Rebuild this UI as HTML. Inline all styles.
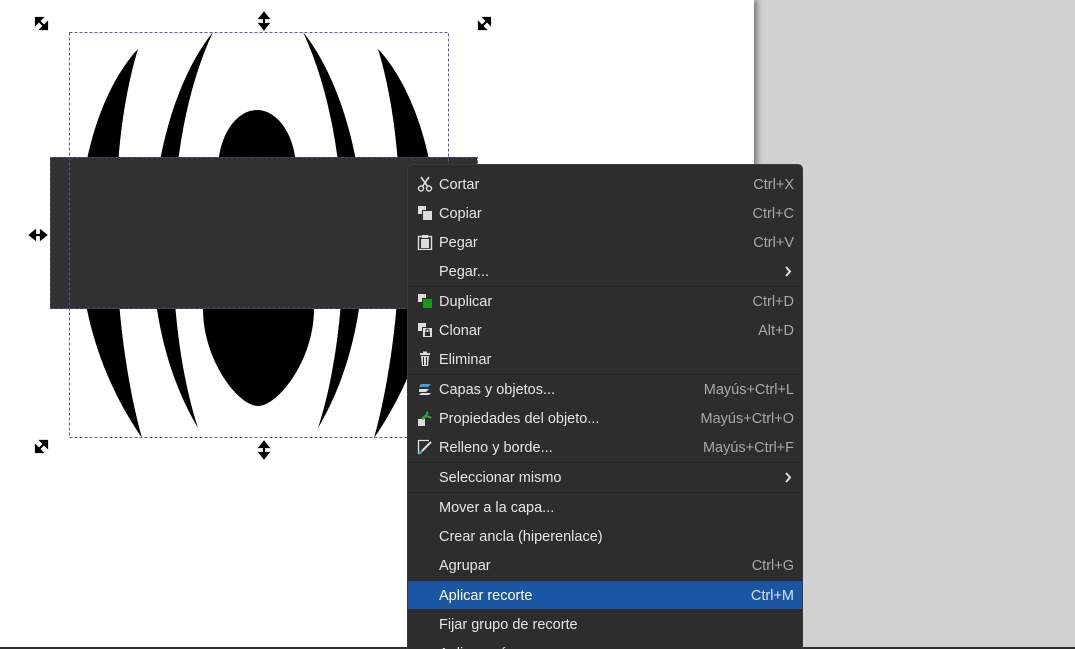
<!DOCTYPE html>
<html><head><meta charset="utf-8"><style>
html,body{margin:0;padding:0;width:1075px;height:649px;overflow:hidden}
body{position:relative;background:#d1d1d1;font-family:"Liberation Sans","DejaVu Sans",sans-serif}
#page{position:absolute;left:0;top:0;width:754px;height:647px;background:#fff;box-shadow:3px 0 6px rgba(0,0,0,.45)}
#bline{position:absolute;left:0;top:647px;width:1075px;height:2px;background:#2e2e2e}
#menu{position:absolute;left:407px;top:164px;width:396px;height:485px;background:#2d2d2d;border-radius:5px 5px 0 0;border:1px solid #3a3a3a;border-bottom:none;box-sizing:border-box;color:#e6e6e6;font-size:14.5px;overflow:hidden}
.it{position:absolute;left:0;width:394px;height:29px;line-height:31px}
.it .t{position:absolute;left:31px}
.it .k{position:absolute;right:8px;color:#a8a8a8}
.it .ic{position:absolute;left:9px;top:6px;width:16px;height:16px}
.sep{position:absolute;left:0;width:394px;height:1px;background:#242424}
.hl{background:#1a56a3;color:#fff}
.hl .k{color:#d8e2f0}
.chev{position:absolute;right:10px;top:9px}
</style></head><body>
<div id="page">
<svg width="754" height="647" style="position:absolute;left:0;top:0">
 <g fill="#000">
  <path d="M138,49 C80,110 40,290 142,438 C112,330 104,160 138,49Z"/>
  <path d="M213,32 C150,110 122,300 198,428 C166,330 158,150 213,32Z"/>
  <path d="M378,49 C436,110 476,290 374,438 C404,330 412,160 378,49Z"/>
  <path d="M303,32 C366,110 394,300 318,428 C350,330 358,150 303,32Z"/>
  <ellipse cx="257" cy="170" rx="39" ry="60"/>
  <path d="M203,309 C203,360 238,406 258,406 C278,406 314,360 314,309Z"/>
 </g>
 <rect x="50" y="157" width="427" height="152" fill="#313131"/>
 <rect x="50.5" y="157.5" width="427" height="151" fill="none" stroke="#4a4a8a" stroke-dasharray="3,2"/>
 <rect x="69.5" y="32.5" width="379" height="405" fill="none" stroke="#5a5a9a" stroke-dasharray="3,2"/>
 <g stroke="#000" stroke-width="2.2" fill="#000">
  <line x1="38" y1="20" x2="45" y2="27"/><path d="M36,18 l6,0 l-6,6z"/><path d="M47,29 l-6,0 l6,-6z"/>
  <line x1="488" y1="20" x2="481" y2="27"/><path d="M490,18 l-6,0 l6,6z"/><path d="M479,29 l6,0 l-6,-6z"/>
  <line x1="45" y1="443" x2="38" y2="450"/><path d="M47,441 l-6,0 l6,6z"/><path d="M36,452 l6,0 l-6,-6z"/>
  <line x1="264" y1="16" x2="264" y2="26"/><path d="M260,18 l4,-5 l4,5z"/><path d="M260,24 l4,5 l4,-5z"/>
  <line x1="264" y1="445" x2="264" y2="455"/><path d="M260,447 l4,-5 l4,5z"/><path d="M260,453 l4,5 l4,-5z"/>
  <line x1="33" y1="235" x2="43" y2="235"/><path d="M35,231 l-5,4 l5,4z"/><path d="M41,231 l5,4 l-5,4z"/>
 </g>
</svg>
</div>
<div id="bline"></div>
<div id="menu">
 <div class="it" style="top:5px"><svg class="ic" viewBox="0 0 16 16"><path d="M4,1 L11,11 M12,1 L5,11" stroke="#ddd" stroke-width="1.6" fill="none"/><circle cx="4" cy="12.5" r="2.5" stroke="#ddd" stroke-width="1.5" fill="none"/><circle cx="12" cy="12.5" r="2.5" stroke="#ddd" stroke-width="1.5" fill="none"/></svg><span class="t">Cortar</span><span class="k">Ctrl+X</span></div>
 <div class="it" style="top:34px"><svg class="ic" viewBox="0 0 16 16"><rect x="1" y="1" width="8" height="8" fill="#ddd"/><rect x="5" y="5" width="10" height="10" fill="#2d2d2d"/><rect x="6" y="6" width="9" height="9" fill="#ddd"/></svg><span class="t">Copiar</span><span class="k">Ctrl+C</span></div>
 <div class="it" style="top:63px"><svg class="ic" viewBox="0 0 16 16"><rect x="1.5" y="2.5" width="13" height="13" stroke="#ddd" stroke-width="1.4" fill="none"/><rect x="5" y="1" width="6" height="3" fill="#ddd"/><rect x="4" y="5" width="8" height="9" fill="#ddd"/></svg><span class="t">Pegar</span><span class="k">Ctrl+V</span></div>
 <div class="it" style="top:92px"><span class="t">Pegar...</span><svg class="chev" width="8" height="11"><path d="M2,1 L6,5.5 L2,10" stroke="#ddd" stroke-width="2" fill="none"/></svg></div>
 <div class="sep" style="top:121px"></div>
 <div class="it" style="top:122px"><svg class="ic" viewBox="0 0 16 16"><rect x="1" y="1" width="8" height="8" fill="#ddd"/><rect x="5" y="5" width="10" height="10" fill="#2d2d2d"/><rect x="6" y="6" width="9" height="9" fill="#1a9a1a"/></svg><span class="t">Duplicar</span><span class="k">Ctrl+D</span></div>
 <div class="it" style="top:151px"><svg class="ic" viewBox="0 0 16 16"><rect x="1" y="1" width="8" height="8" fill="#ddd"/><rect x="5" y="5" width="10" height="10" fill="#2d2d2d"/><rect x="6" y="6" width="9" height="9" fill="#ddd"/><rect x="8" y="10" width="5" height="4" fill="#2d2d2d"/><path d="M9,10 v-1.5 a1.5,1.5 0 0 1 3,0 v1.5" stroke="#2d2d2d" fill="none"/></svg><span class="t">Clonar</span><span class="k">Alt+D</span></div>
 <div class="it" style="top:180px"><svg class="ic" viewBox="0 0 16 16"><rect x="3" y="2" width="10" height="2" fill="#ddd"/><rect x="6" y="0.5" width="4" height="2" fill="#ddd"/><path d="M4,5 h8 l-1,10 h-6z" fill="#ddd"/><path d="M6.5,6 v8 M9.5,6 v8" stroke="#2d2d2d"/></svg><span class="t">Eliminar</span></div>
 <div class="sep" style="top:209px"></div>
 <div class="it" style="top:210px"><svg class="ic" viewBox="0 0 16 16"><path d="M4,3 h10 l-3,3 h-9z" fill="#3aa0e0"/><path d="M2,8 h10 l-3,3 h-7z" fill="#ddd"/><path d="M4,12 h10 l-2,2 h-10z" fill="#ddd"/></svg><span class="t">Capas y objetos...</span><span class="k">Mayús+Ctrl+L</span></div>
 <div class="it" style="top:239px"><svg class="ic" viewBox="0 0 16 16"><rect x="1" y="9" width="7" height="7" fill="#ddd"/><path d="M4,8 L8,5 L10,1 L12,3 L10,5 L15,7 L13,9 L10,7 L6,10z" fill="#2ea02e"/></svg><span class="t">Propiedades del objeto...</span><span class="k">Mayús+Ctrl+O</span></div>
 <div class="it" style="top:268px"><svg class="ic" viewBox="0 0 16 16"><path d="M1.5,15 V1.5 H12" stroke="#ddd" stroke-width="1.3" fill="none"/><path d="M14,3 L5,12" stroke="#ddd" stroke-width="2"/><path d="M5,12 L2,15" stroke="#3aa0e0" stroke-width="2.5"/></svg><span class="t">Relleno y borde...</span><span class="k">Mayús+Ctrl+F</span></div>
 <div class="sep" style="top:297px"></div>
 <div class="it" style="top:298px"><span class="t">Seleccionar mismo</span><svg class="chev" width="8" height="11"><path d="M2,1 L6,5.5 L2,10" stroke="#ddd" stroke-width="2" fill="none"/></svg></div>
 <div class="sep" style="top:327px"></div>
 <div class="it" style="top:328px"><span class="t">Mover a la capa...</span></div>
 <div class="it" style="top:357px"><span class="t">Crear ancla (hiperenlace)</span></div>
 <div class="it" style="top:386px"><span class="t">Agrupar</span><span class="k">Ctrl+G</span></div>
 <div class="it hl" style="top:416px;height:28px"><span class="t">Aplicar recorte</span><span class="k">Ctrl+M</span></div>
 <div class="it" style="top:445px"><span class="t">Fijar grupo de recorte</span></div>
 <div class="it" style="top:474px"><span class="t">Aplicar máscara</span></div>
</div>
</body></html>
